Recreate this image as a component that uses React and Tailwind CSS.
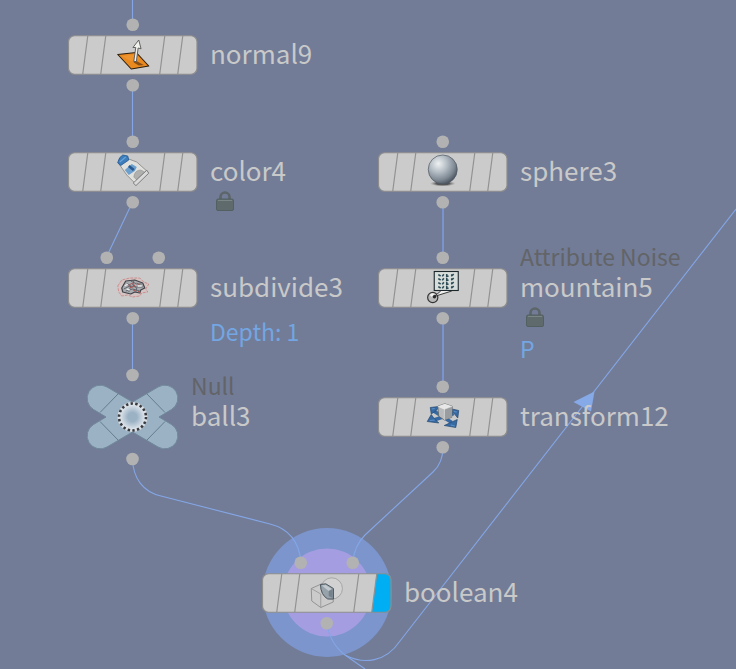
import React from "react";

function NormalIcon() {
  return (
    <g>
      <path d="M-15-.5 3.5-2.5 16 11-1.5 14Z" fill="#e88a20" stroke="#2b1c0c" strokeWidth="1.1" strokeLinejoin="round" />
      <path d="M-11 1 2-.5 8 4-2 6Z" fill="#f29b3a" opacity=".6" />
      <path d="M2 5 11 10 6 10.5 1 7.5Z" fill="#6f3f10" opacity=".8" />
      <path d="M1 6.5 3-7.5H.2L6-15 8.3-6.2 5.4-7 3.6 6.5Z" fill="#f1f1ee" stroke="#555" strokeWidth=".9" strokeLinejoin="round" />
    </g>
  );
}

function ColorIcon() {
  return (
    <g strokeLinejoin="round">
      <path d="M-13-7-4-13 4-10 14-1 2 11-6 3Z" fill="#e0e0dd" stroke="#777" strokeWidth=".7" />
      <path d="M-14.5-11Q-13.5-15-10-17L-5-16-4-12-12-6.5-15-9Z" fill="#3b7dbd" stroke="#24578c" strokeWidth=".8" />
      <path d="M-13-10-7-15" stroke="#6da5d8" strokeWidth="1.2" />
      <path d="M-8-2-1-8 4-5 2-1-4 3Z" fill="#6b9fce" />
      <path d="M-4-6 1-2" stroke="#28598f" strokeWidth="2.6" />
      <path d="M1 5Q2-2 8-2L12 0 4 8Z" fill="#b0b0ae" stroke="#8b8b8b" strokeWidth=".5" />
      <path d="M14-1.8 16 1.2 3.2 13.6.5 11Z" fill="#dadada" stroke="#666" strokeWidth=".8" />
    </g>
  );
}

function SubdivideIcon() {
  return (
    <g fill="none" strokeLinejoin="round">
      <path d="M-15-2-11-8-3-10 7-10 11-6 16-4 13 1 15 4 9 5 7 8 0 9-5 7-11 8-14 4Z" fill="#d5c4c4" stroke="#cb7676" strokeWidth=".7" strokeDasharray="3 1" />
      <path d="M-11 0-7-7 2-8 10-5 12 0 8 2 7 5 2 4-2 6-10 4Z" fill="#a9adb1" stroke="#404348" strokeWidth="1.2" />
      <path d="M-9 1-3-2 4-1 10-1M-6-5-2-2-4 4M1-7 0-3 4 0 3 4M-7 3 0 1 7 3M-2-7 4-4 9-4" stroke="#5b5f65" strokeWidth=".9" />
      <path d="M-4-3 0-5 2-2-2 0ZM4-5 7-3M0 2 3 3M5 3 8 5" stroke="#ad5757" strokeWidth="1" />
      <path d="M-8-2-5-4M5-2H9M-6 1-3 2" stroke="#e8e8e8" strokeWidth="1.4" />
    </g>
  );
}

function SphereIcon() {
  return (
    <g>
      <ellipse cx="0" cy="11.5" rx="13" ry="3" fill="url(#sphereShadow)" />
      <circle cx="0" cy="-2.5" r="14.5" fill="url(#sphereFill)" stroke="#4d5660" strokeWidth=".7" />
    </g>
  );
}

function NoiseIcon() {
  return (
    <g>
      <rect x="-8.5" y="-16.5" width="24" height="19" fill="#d7dedb" stroke="#1c272c" strokeWidth="1.1" />
      {[-12.8, -8.8, -4.8, -0.8].map((y) => (
        <g key={y} stroke="#2c4b56" strokeWidth="1.6" fill="none">
          <path d={`M-4.5 ${y - 0.6}l2.4 1.4M-.5 ${y + 1.2}l1.6-2.2M4 ${y - 1.2}v2.4l1.8-.5M8.5 ${y + 1}l2.5-2M9 ${y - 1}v2`} />
        </g>
      ))}
      <circle cx="-10" cy="9.5" r="5.1" fill="#b9b9b9" stroke="#343434" strokeWidth="1.2" />
      <path d="M-13 7Q-11 4-8 6L-11 9Z" fill="#efefef" />
      <path d="M-8.5 8.5-2 3H9Z" fill="#eee" />
      <path d="M-2 3-8.5 8.5 9 3" fill="none" stroke="#292929" strokeWidth=".9" />
      <circle cx="-8.3" cy="8.7" r="1.7" fill="#292929" />
    </g>
  );
}

function TransformIcon() {
  return (
    <g strokeLinejoin="round">
      <path d="M-9-6 9 5.5M11-3.5-9 3" stroke="#376aa5" strokeWidth="3.6" />
      <g fill="#376aa5" stroke="#26496f" strokeWidth=".7">
        <path d="M-12.5-9.5-4-10.5-6-7-8.5-5-11.5-3Z" />
        <path d="M-15.5 4.5-11.5-2.5-9 1-4 6Z" />
        <path d="M13 10.5 1.5 8.5 8 5.5 14.5 2.5Z" />
        <path d="M16-6.5 7-8.5 11-4 15 1Z" />
      </g>
      <path d="M-13 3.5-8 3M8 8 12 9M11-5.5 14-5M-11-8-8-8.5" stroke="#5c91c8" strokeWidth="1.2" />
      <path d="M-5-10.7 2-13.2 9.5-10.7 9 .3 1.5 3-4-.7Z" fill="#b8babb" stroke="#5f6467" strokeWidth=".8" />
      <path d="M-5-10.7 2-13.2 9.5-10.7 1.7-7.8Z" fill="#e6e7e6" />
      <path d="M1.7-7.8 9.5-10.7 9 .3 1.5 3Z" fill="#999da0" />
      <path d="M-5-10.7 1.7-7.8 9.5-10.7M1.7-7.8 1.5 3" fill="none" stroke="#eee" strokeWidth=".6" />
    </g>
  );
}

function BooleanIcon() {
  return (
    <g strokeLinejoin="round" fill="none">
      <circle cx="5" cy="-4.5" r="10.7" stroke="#a0a0a0" strokeWidth=".9" fill="#d2d2d2" />
      <path d="M-15.5-4.5-5.5-9 6.5-4V9L-6 14.5-15 8Z" stroke="#8c8c8c" strokeWidth=".9" />
      <path d="M-15.5-4.5-6 1V14.5" stroke="#949494" strokeWidth=".8" />
      <path d="M-6.3-8.5-1-9.2 6.7-4.5V6H1Q-6 2-6.3-8.5Z" fill="#97a2aa" stroke="#4d5860" strokeWidth="1" />
      <path d="M-5-7.5-1-8 5-4 2-2Z" fill="#c2cacf" />
      <path d="M2-2 6-4V5L2 3Z" fill="#75828c" />
    </g>
  );
}

function Ports({ inputs, reach }) {
  return (
    <g fill="#b2b2b2">
      {inputs.map((dx) => (
        <circle key={dx} cx={dx} cy={-reach} r="6.3" />
      ))}
      <circle cx="0" cy={reach} r="6.3" />
    </g>
  );
}

function NodeTile({ icon: Icon, display, id, inputs }) {
  return (
    <svg width="130" height="40" viewBox="-64.75 -20 130 40" className="block overflow-visible" aria-hidden="true">
      <defs>
        <clipPath id={`${id}-tile`}>
          <rect x="-64.5" y="-19.5" width="129" height="39" rx="6" />
        </clipPath>
      </defs>
      <rect x="-64.25" y="-19.25" width="128.5" height="38.5" rx="6" fill="#cbcbcb" />
      {display && <path d="M50-20H65V20H45Z" fill="#00aef3" clipPath={`url(#${id}-tile)`} />}
      <path d="M-45-19-50 19M-27-19-32 19M32-19 27 19M50-19 45 19" stroke="#929292" strokeWidth="1.2" fill="none" />
      <rect x="-64.25" y="-19.25" width="128.5" height="38.5" rx="6" fill="none" stroke="#8d8d8d" strokeWidth="1.2" />
      <Icon />
      <Ports inputs={inputs} reach={30.3} />
    </svg>
  );
}

function NullTile({ inputs }) {
  return (
    <svg width="92" height="66" viewBox="-45.5 -33 92 66" className="block overflow-visible" aria-hidden="true">
      <path
        d="M0-15 25.5-30A13 13 0 0 1 39-7.5L26.5 0 39 7.5A13 13 0 0 1 25.5 30L0 15-25.5 30A13 13 0 0 1-39 7.5L-26.5 0-39-7.5A13 13 0 0 1-25.5-30Z"
        fill="#9bb2c5"
        stroke="#70889a"
        strokeWidth="1"
      />
      <path d="M-14-23.5-32.5-4.5M14-23.5 32.5-4.5M-14 23.5-32.5 4.5M14 23.5 32.5 4.5" stroke="#647c8c" strokeWidth="1" />
      <circle r="15" fill="url(#nullGlow)" />
      <circle r="13.5" fill="none" stroke="#383a3e" strokeWidth="2.6" strokeDasharray="2.4 2.312" />
      <Ports inputs={inputs} reach={42} />
    </svg>
  );
}

function Lock() {
  return (
    <svg width="18" height="20" viewBox="0 0 18 20" className="ml-[6px] mt-[6px] block" role="img" aria-label="Locked">
      <path d="M4.5 10V6A4.5 4.5 0 0 1 13.5 6V10" fill="none" stroke="#5c6569" strokeWidth="2.6" />
      <rect x=".5" y="8" width="17" height="11.5" rx="1.5" fill="#5e6a6b" stroke="#536062" />
      <path d="M2 9.5H16" stroke="#7a8686" />
    </svg>
  );
}

const nodes = [
  { id: "normal9", x: 133, y: 55, icon: NormalIcon, inputs: [0] },
  { id: "color4", x: 133, y: 172, icon: ColorIcon, inputs: [0], locked: true },
  { id: "subdivide3", x: 133, y: 288, icon: SubdivideIcon, inputs: [-26, 26], info: "Depth: 1" },
  { id: "ball3", x: 133, y: 417, inputs: [0], type: "Null", isNull: true },
  { id: "sphere3", x: 443, y: 172, icon: SphereIcon, inputs: [0] },
  { id: "mountain5", x: 443, y: 288, icon: NoiseIcon, inputs: [0], type: "Attribute Noise", locked: true, info: "P" },
  { id: "transform12", x: 443, y: 417, icon: TransformIcon, inputs: [0] },
  { id: "boolean4", x: 327, y: 593, icon: BooleanIcon, inputs: [-26, 26], display: true },
];

function Node({ node }) {
  return (
    <article className="absolute" style={{ left: node.x, top: node.y }} aria-label={node.id}>
      <div className="absolute -translate-x-1/2 -translate-y-1/2">
        {node.isNull ? (
          <NullTile inputs={node.inputs} />
        ) : (
          <NodeTile icon={node.icon} display={node.display} id={node.id} inputs={node.inputs} />
        )}
      </div>
      <div
        className="absolute flex flex-col whitespace-nowrap"
        style={{ left: node.isNull ? 58 : 77, top: node.type ? -47 : -17 }}
      >
        {node.type && <p className="text-[23px] leading-[30px] text-[#626467]">{node.type}</p>}
        <h2 className="text-[26px] leading-[30px] text-[#c9c9c9]">{node.id}</h2>
        {node.locked && <Lock />}
        {node.info && (
          <p className={`text-[23px] leading-[30px] text-[#73a6e3] ${node.locked ? "mt-[6px]" : "mt-[15px]"}`}>
            {node.info}
          </p>
        )}
      </div>
    </article>
  );
}

function Wires() {
  return (
    <svg className="absolute inset-0 size-full" aria-hidden="true">
      <defs>
        <radialGradient id="sphereFill" cx=".35" cy=".3" r=".75">
          <stop offset="0" stopColor="#eef1f2" />
          <stop offset=".35" stopColor="#bcc4cb" />
          <stop offset=".75" stopColor="#7e8994" />
          <stop offset="1" stopColor="#47515d" />
        </radialGradient>
        <radialGradient id="sphereShadow">
          <stop offset=".5" stopColor="#555" />
          <stop offset="1" stopColor="#999" stopOpacity="0" />
        </radialGradient>
        <radialGradient id="nullGlow">
          <stop offset=".3" stopColor="#9bb2c5" />
          <stop offset=".8" stopColor="#dbe2e9" />
          <stop offset="1" stopColor="#d5dce4" />
        </radialGradient>
      </defs>
      <circle cx="327" cy="592.5" r="64.5" fill="#7c95cc" />
      <circle cx="327" cy="592.5" r="44" fill="#a49de2" />
      <g fill="none" stroke="#84a6e6" strokeWidth="1.1">
        <path d="M132.5 0V25M132.5 85V142M132.5 202 106.5 257M132.5 318V375" />
        <path d="M443 202V257M443 318V386" stroke="#7b9add" strokeWidth="1.6" />
        <path d="M132.5 459C133 478 143 492 161 496L270 524Q298 531 301 562" />
        <path d="M443 447Q443 463 433 472L365 535Q354 546 353 562" />
        <path d="M327 623C329 639 336 648 345 655L365 669" />
        <path d="M345 655C364 665 386 662 400 641L736 209" />
      </g>
      <path d="M594.5 391.5 573.5 402 591 411.5Z" fill="#86a9e8" />
    </svg>
  );
}

export default function App() {
  return (
    <main className="relative min-h-screen w-full overflow-hidden bg-[#727c97] font-['Noto_Sans_CJK_SC','Noto_Sans',sans-serif]">
      <Wires />
      {nodes.map((node) => (
        <Node key={node.id} node={node} />
      ))}
    </main>
  );
}
